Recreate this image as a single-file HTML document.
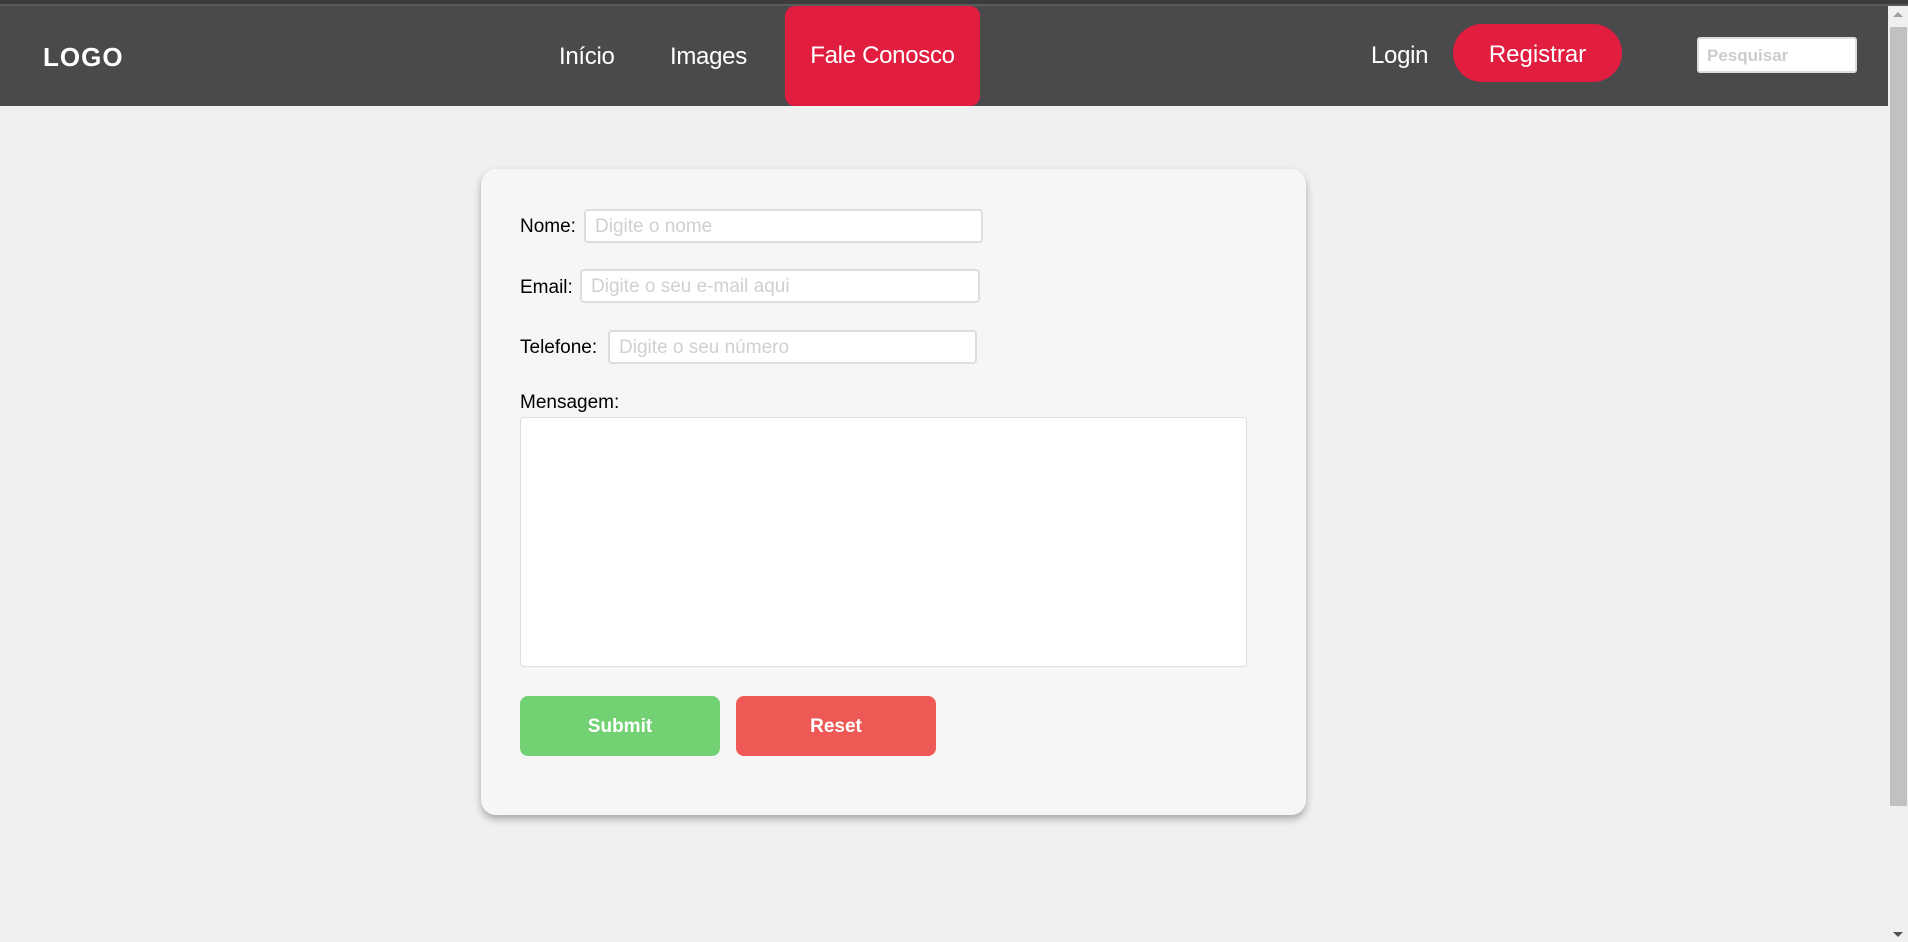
<!DOCTYPE html>
<html><head><meta charset="utf-8"><style>
*{box-sizing:border-box;margin:0;padding:0}
body{width:1908px;height:942px;background:#f0f0f0;font-family:"Liberation Sans",Arial,sans-serif;position:relative;overflow:hidden}
.top{position:absolute;left:0;top:0;width:1908px;height:6px;background:#3c3c3c;border-bottom:2px solid #5a5a5a}
.hdr{position:absolute;left:0;top:6px;width:1888px;height:100px;background:#4a4a4c}
.a{position:absolute;color:#fff;font-size:24px;letter-spacing:-0.3px}
.logo{position:absolute;left:43px;top:42px;color:#fff;font-weight:bold;font-size:26px;letter-spacing:1px}
.fale{position:absolute;left:785px;top:6px;width:195px;height:100px;background:#e11d40;border-radius:10px;color:#fff;font-size:24px;text-align:center;line-height:100px;letter-spacing:-0.3px}
.reg{position:absolute;left:1453px;top:24px;width:169px;height:58px;background:#e11d40;border-radius:29px;color:#fff;font-size:24px;text-align:center;line-height:62px}
.srch{position:absolute;left:1697px;top:37px;width:160px;height:36px;background:#fff;border:2px solid #ddd;border-radius:3px;color:#ccc;font-size:17px;padding:7px 8px;font-weight:bold}
.sb{position:absolute;left:1888px;top:6px;width:20px;height:936px;background:#f0f0f0}
.thumb{position:absolute;left:1890px;top:27px;width:17px;height:779px;background:#c1c1c1}
.card{position:absolute;left:481px;top:169px;width:825px;height:646px;background:#f6f6f6;border-radius:15px;box-shadow:0 4px 8px rgba(0,0,0,0.3)}
.lbl{position:absolute;left:520px;font-size:19px;color:#000}
.inp{position:absolute;height:34px;background:#fff;border:2px solid #ddd;border-radius:4px;color:#d0d0d0;font-size:19px;padding:5px 9px}
.ta{position:absolute;left:520px;top:417px;width:727px;height:250px;background:#fff;border:1px solid #ddd;border-radius:4px}
.btn{position:absolute;top:696px;width:200px;height:60px;border-radius:8px;color:#fff;font-weight:bold;font-size:19px;text-align:center;line-height:62px}
</style></head><body>
<div class="top"></div>
<div class="hdr"></div>
<div class="logo">LOGO</div>
<div class="a" style="left:559px;top:43px">Início</div>
<div class="a" style="left:670px;top:43px">Images</div>
<div class="fale">Fale Conosco</div>
<div class="a" style="left:1371px;top:42px">Login</div>
<div class="reg">Registrar</div>
<div class="srch">Pesquisar</div>
<div class="sb"></div>
<div class="thumb"></div>
<div style="position:absolute;left:1893px;top:12px;width:0;height:0;border-left:5px solid transparent;border-right:5px solid transparent;border-bottom:5px solid #a0a0a0"></div>
<div style="position:absolute;left:1893px;top:932px;width:0;height:0;border-left:5px solid transparent;border-right:5px solid transparent;border-top:5px solid #505050"></div>
<div class="card"></div>
<div class="lbl" style="top:216px">Nome:</div>
<div class="inp" style="left:584px;top:209px;width:399px">Digite o nome</div>
<div class="lbl" style="top:277px">Email:</div>
<div class="inp" style="left:580px;top:269px;width:400px">Digite o seu e-mail aqui</div>
<div class="lbl" style="top:337px">Telefone:</div>
<div class="inp" style="left:608px;top:330px;width:369px">Digite o seu número</div>
<div class="lbl" style="top:392px">Mensagem:</div>
<div class="ta"></div>
<div class="btn" style="left:520px;background:#72d273">Submit</div>
<div class="btn" style="left:736px;background:#ee5955">Reset</div>
</body></html>
